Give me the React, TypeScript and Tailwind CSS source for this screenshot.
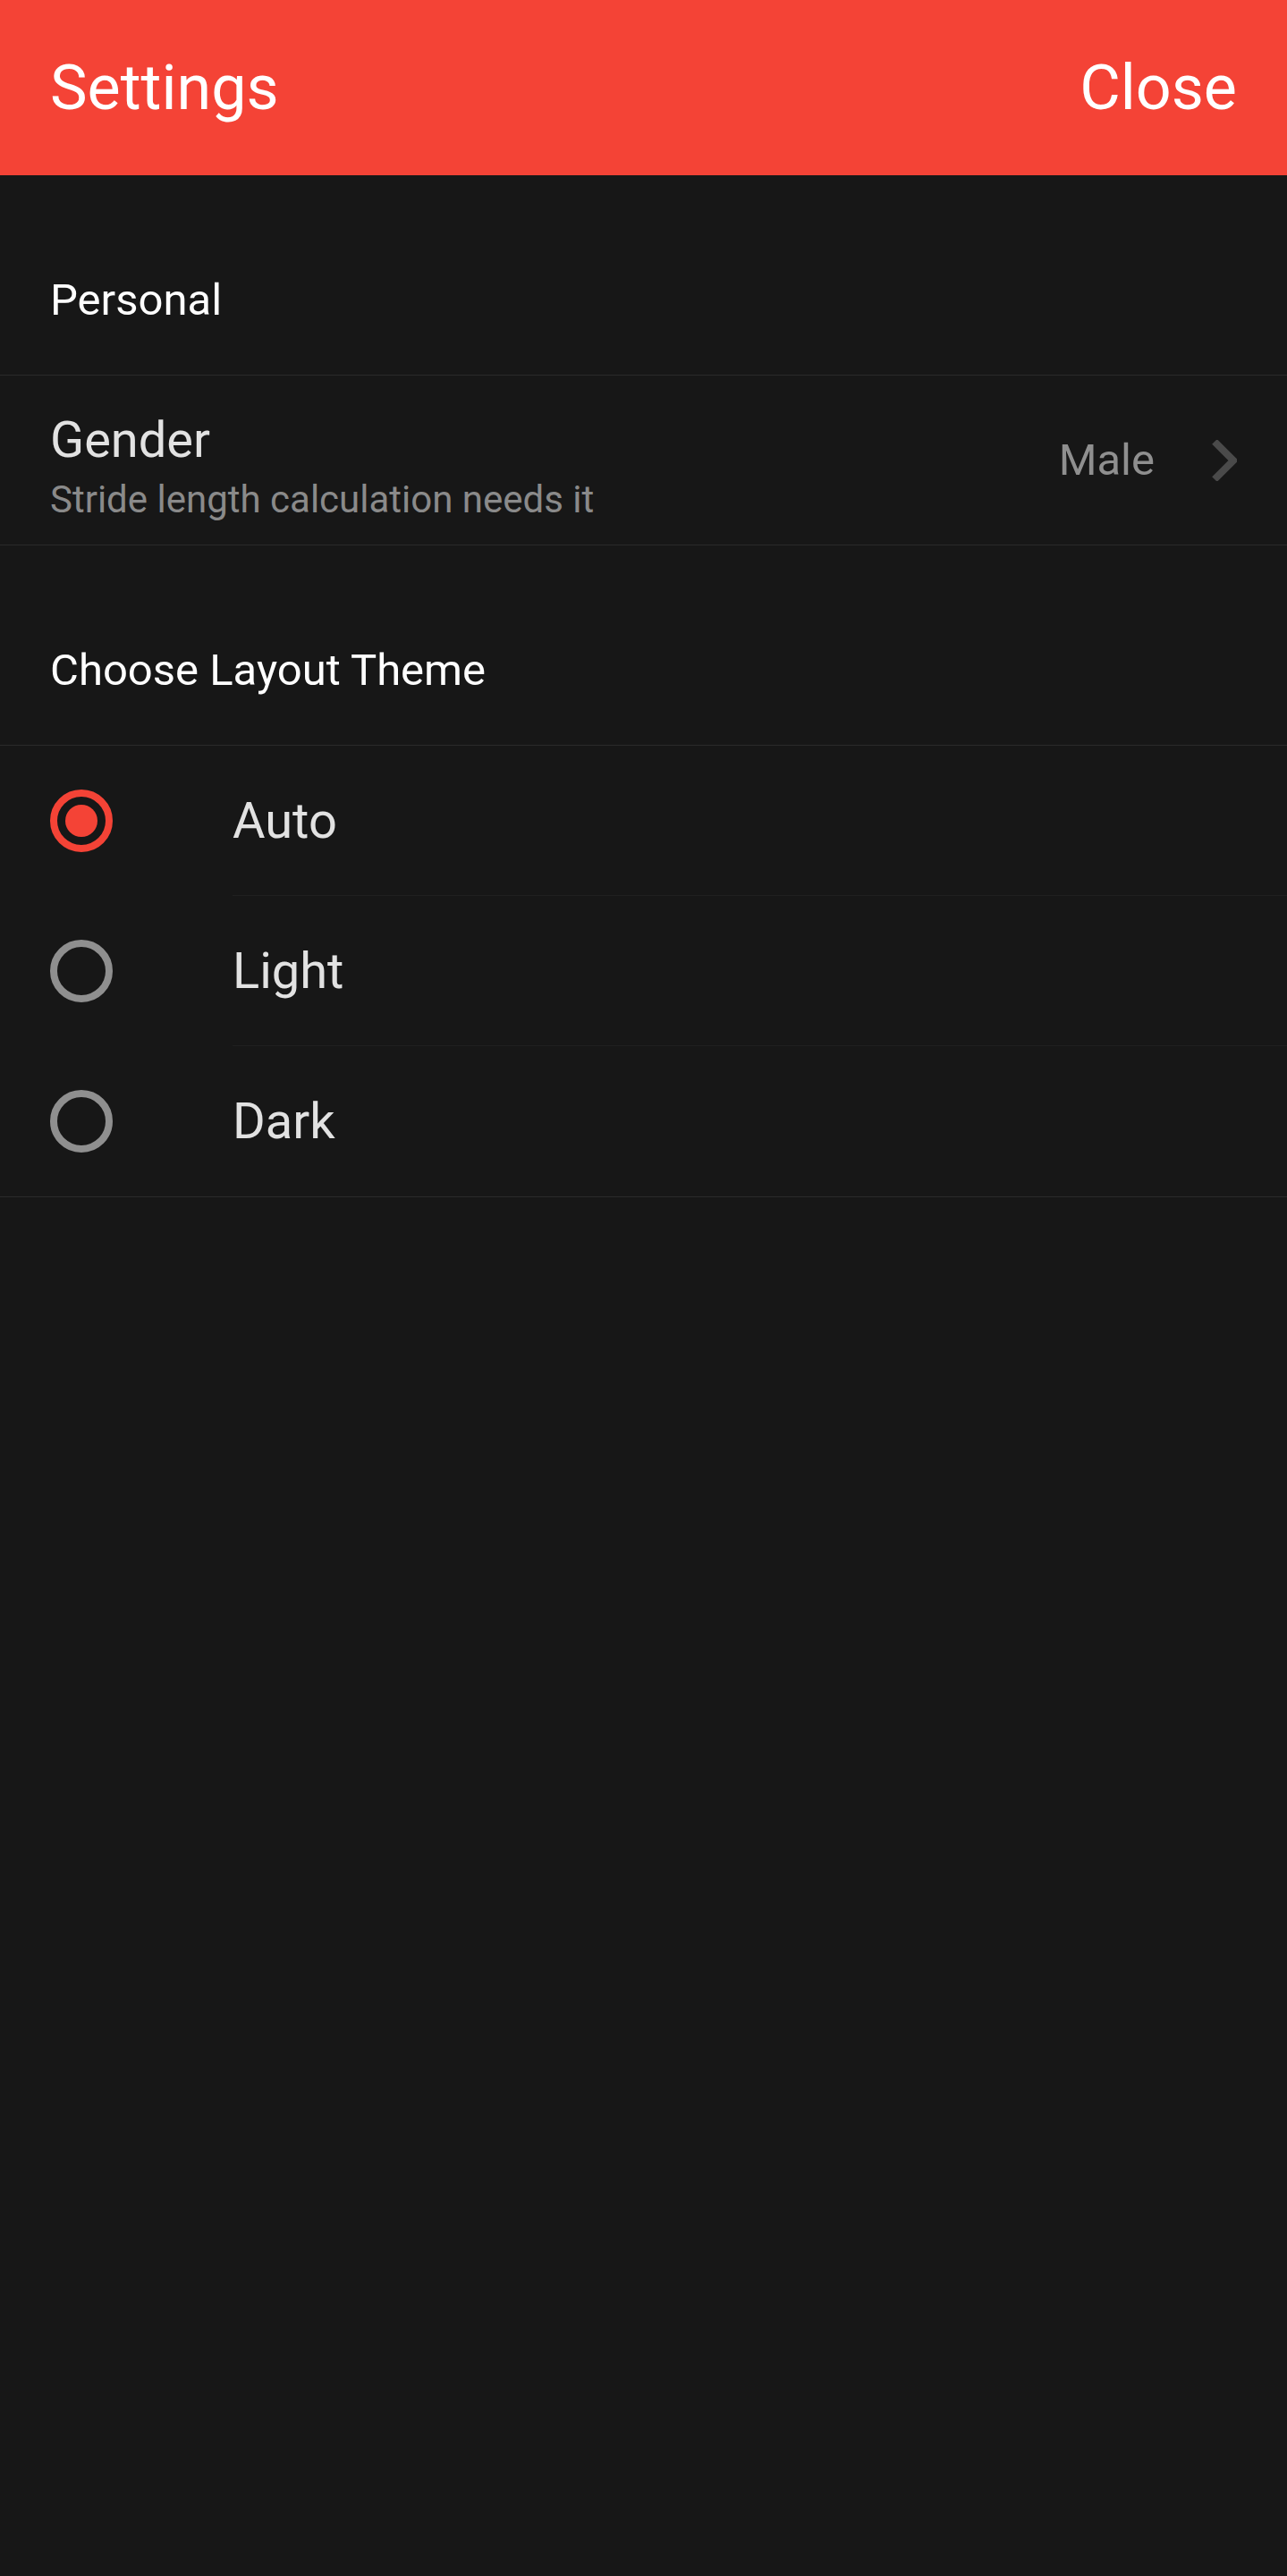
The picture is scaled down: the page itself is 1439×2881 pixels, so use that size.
import React, { useState } from 'react';

const font = { fontFamily: 'Roboto, "Noto Sans", sans-serif' };

type Theme = 'auto' | 'light' | 'dark';

const themes: { key: Theme; label: string }[] = [
  { key: 'auto', label: 'Auto' },
  { key: 'light', label: 'Light' },
  { key: 'dark', label: 'Dark' },
];

const SectionHeader: React.FC<{ title: string }> = ({ title }) => (
  <div className="pt-14">
    <div className="h-[168px] px-14 flex items-center border-b border-[#2a2a2a]">
      <span className="text-[49px] text-white">{title}</span>
    </div>
  </div>
);

const Radio: React.FC<{ checked: boolean }> = ({ checked }) =>
  checked ? (
    <span className="w-[70px] h-[70px] rounded-full border-[8px] border-[#f44336] flex items-center justify-center">
      <span className="w-[36px] h-[36px] rounded-full bg-[#f44336]" />
    </span>
  ) : (
    <span className="w-[70px] h-[70px] rounded-full border-[8px] border-[#8f8f8f]" />
  );

export default function App() {
  const [theme, setTheme] = useState<Theme>('auto');

  return (
    <div className="min-h-[2881px] bg-[#171717]" style={font}>
      {/* top bar */}
      <div className="h-[196px] bg-[#f44336] px-14 flex items-center justify-between text-white text-[70px]">
        <span>Settings</span>
        <span>Close</span>
      </div>

      <SectionHeader title="Personal" />

      <div className="h-[190px] px-14 flex items-center justify-between border-b border-[#2a2a2a]">
        <div className="flex flex-col gap-[9px] pt-3">
          <span className="text-[56px] leading-[66px] text-[#e2e2e2]">Gender</span>
          <span className="text-[42px] leading-[49px] text-[#8a8a8a]">
            Stride length calculation needs it
          </span>
        </div>
        <div className="flex items-center gap-[64px]">
          <span className="text-[49px] text-[#8f8f8f]">Male</span>
          <svg width="28" height="46" viewBox="0 0 28 46" fill="none">
            <path d="M3 2 L24 23 L3 44" stroke="#4a4a4a" strokeWidth="8" />
          </svg>
        </div>
      </div>

      <SectionHeader title="Choose Layout Theme" />

      <div className="border-b border-[#2a2a2a]">
        {themes.map((t, i) => (
          <button
            key={t.key}
            onClick={() => setTheme(t.key)}
            className="w-full h-[168px] flex items-stretch text-left"
          >
            <div className="w-[260px] pl-14 flex items-center shrink-0">
              <Radio checked={theme === t.key} />
            </div>
            <div
              className={
                i < themes.length - 1
                  ? 'flex-1 flex items-center border-b border-[#202020]'
                  : 'flex-1 flex items-center'
              }
            >
              <span className="text-[56px] text-[#e2e2e2]">{t.label}</span>
            </div>
          </button>
        ))}
      </div>
    </div>
  );
}
